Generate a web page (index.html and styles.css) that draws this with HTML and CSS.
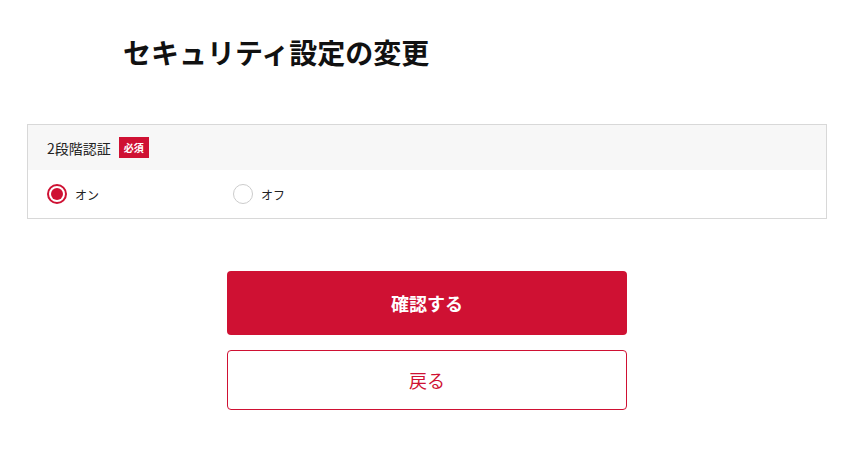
FILE: index.html
```html
<!DOCTYPE html>
<html lang="ja">
<head>
    <meta charset="UTF-8">
    <meta name="viewport" content="width=device-width, initial-scale=1.0">
    <title>セキュリティ設定の変更</title>
    <link rel="stylesheet" href="styles.css">
</head>
<body>
    <div class="page">
        <h1 class="page-title">セキュリティ設定の変更</h1>

        <div class="form-box">
            <div class="form-head">
                <span class="form-label">2段階認証</span>
                <span class="required">必須</span>
            </div>
            <div class="form-body">
                <label class="radio">
                    <input type="radio" name="twofa" value="on" checked>
                    <span class="radio-mark"></span>
                    <span class="radio-text">オン</span>
                </label>
                <label class="radio">
                    <input type="radio" name="twofa" value="off">
                    <span class="radio-mark"></span>
                    <span class="radio-text">オフ</span>
                </label>
            </div>
        </div>

        <div class="actions">
            <button class="btn btn-primary">確認する</button>
            <button class="btn btn-secondary">戻る</button>
        </div>
    </div>
</body>
</html>
```

FILE: styles.css
```css
body {
    margin: 0;
    font-family: "Noto Sans CJK JP", "Noto Sans", sans-serif;
    color: #222;
    background: #fff;
}
.page {
    width: 800px;
    margin: 0 27px;
    padding-top: 30px;
}
.page-title {
    margin: 0 0 50px;
    padding-left: 96px;
    font-size: 28px;
    line-height: 44px;
    font-weight: bold;
    color: #111;
}
.form-box {
    border: 1px solid #d8d8d8;
}
.form-head {
    display: flex;
    align-items: center;
    height: 45px;
    padding-left: 19px;
    background-color: #f7f7f7;
}
.form-label {
    font-size: 14px;
    color: #222;
}
.required {
    margin-left: 8px;
    padding: 0 5px;
    height: 21px;
    line-height: 21px;
    font-size: 10px;
    font-weight: bold;
    color: #fff;
    background-color: #cf1133;
}
.form-body {
    display: flex;
    align-items: center;
    height: 48px;
    padding-left: 19px;
}
.radio {
    display: flex;
    align-items: center;
    width: 186px;
    cursor: pointer;
}
.radio input {
    display: none;
}
.radio-mark {
    box-sizing: border-box;
    width: 20px;
    height: 20px;
    border: 1px solid #ccc;
    border-radius: 50%;
    background: #fff;
    position: relative;
}
.radio input:checked + .radio-mark {
    border: 2px solid #cf1133;
}
.radio input:checked + .radio-mark::after {
    content: "";
    position: absolute;
    top: 2px;
    left: 2px;
    width: 12px;
    height: 12px;
    border-radius: 50%;
    background: #cf1133;
}
.radio-text {
    margin-left: 8px;
    font-size: 12px;
    color: #222;
}
.actions {
    display: flex;
    flex-direction: column;
    align-items: center;
    gap: 15px;
    margin-top: 52px;
}
.btn {
    box-sizing: border-box;
    width: 400px;
    border-radius: 4px;
    font-family: "Noto Sans CJK JP", "Noto Sans", sans-serif;
    font-size: 18px;
    cursor: pointer;
}
.btn-primary {
    height: 64px;
    border: none;
    background-color: #cf1133;
    color: #fff;
    font-weight: bold;
}
.btn-secondary {
    height: 60px;
    border: 1px solid #cf1133;
    background-color: #fff;
    color: #cf1133;
}
```
